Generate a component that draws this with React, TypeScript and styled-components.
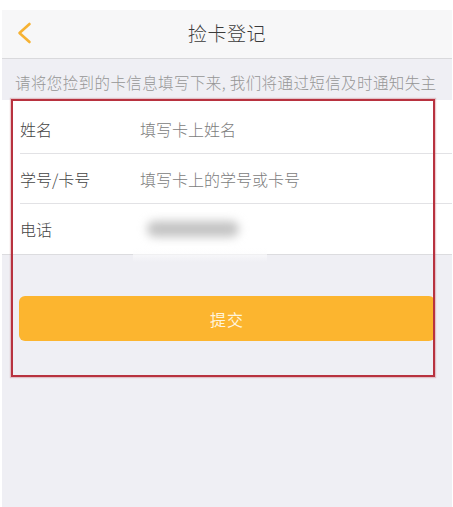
import styled, { createGlobalStyle } from 'styled-components';

const GlobalStyle = createGlobalStyle`
  html, body {
    margin: 0;
    padding: 0;
    background: #ffffff;
  }
  body {
    font-family: "Noto Sans CJK SC", "Noto Sans", sans-serif;
  }
`;

const Screen = styled.div`
  position: relative;
  margin: 10px 1px 0 2px;
  height: 497px;
  background: #efeff4;
  display: flex;
  flex-direction: column;
`;

const NavBar = styled.div`
  height: 48px;
  background: #f7f7f8;
  border-bottom: 1px solid #d9d9dc;
  display: grid;
  grid-template-columns: 60px 1fr 60px;
  align-items: center;
`;

const BackButton = styled.div`
  display: flex;
  align-items: center;
  padding-left: 15px;
  padding-bottom: 2px;
`;

const Title = styled.div`
  text-align: center;
  font-size: 19px;
  font-weight: 300;
  color: #3a3a3a;
  letter-spacing: 0.5px;
  padding-bottom: 4px;
`;

const Hint = styled.div`
  height: 41px;
  box-sizing: border-box;
  padding: 13px 0 0 13px;
  font-size: 15.5px;
  font-weight: 300;
  line-height: 20px;
  color: #969696;
  letter-spacing: 0.4px;
  white-space: nowrap;
`;

const Form = styled.div`
  background: #ffffff;
  padding-top: 4px;
  border-bottom: 1px solid #dcdcdf;
`;

const Row = styled.div<{ $last?: boolean }>`
  position: relative;
  height: 50px;
  margin-left: 18px;
  display: flex;
  align-items: center;
  border-bottom: ${(p) => (p.$last ? 'none' : '1px solid #e2e2e5')};
  box-sizing: border-box;
`;

const Label = styled.div`
  width: 120px;
  font-size: 16px;
  font-weight: 300;
  color: #444444;
`;

const Placeholder = styled.div`
  font-size: 16px;
  font-weight: 300;
  color: #7c7c7c;
`;

const Redaction = styled.div`
  position: absolute;
  left: 113px;
  top: 0;
  bottom: -8px;
  width: 134px;
  background: linear-gradient(#ffffff 75%, rgba(239, 239, 244, 0.2));
  z-index: 1;
`;

const BlurBlob = styled.div`
  position: absolute;
  left: 14px;
  top: 17px;
  width: 92px;
  height: 16px;
  border-radius: 8px;
  background: #c4c4c4;
  filter: blur(5px);
`;

const ButtonArea = styled.div`
  padding: 41px 17px 0 17px;
`;

const SubmitButton = styled.button`
  width: 100%;
  height: 45px;
  border: none;
  border-radius: 6px;
  background: #fcb52f;
  color: #fff4dc;
  font-family: inherit;
  font-size: 16px;
  font-weight: 400;
  letter-spacing: 1px;
`;

const Annotation = styled.div`
  position: absolute;
  left: 9px;
  top: 89px;
  width: 424px;
  height: 278px;
  box-sizing: border-box;
  border: 2px solid #b8323f;
  box-shadow: 0 0 1px 1px rgba(184, 50, 63, 0.25);
  pointer-events: none;
  z-index: 2;
`;

const Chevron = () => (
  <svg width="15" height="22" viewBox="0 0 15 22">
    <polyline
      points="12.5,2 2.5,11 12.5,20"
      fill="none"
      stroke="#f6b233"
      strokeWidth="2.6"
      strokeLinecap="round"
      strokeLinejoin="round"
    />
  </svg>
);

const App = () => {
  return (
    <>
      <GlobalStyle />
      <Screen>
        <NavBar>
          <BackButton>
            <Chevron />
          </BackButton>
          <Title>捡卡登记</Title>
          <div />
        </NavBar>
        <Hint>请将您捡到的卡信息填写下来, 我们将通过短信及时通知失主</Hint>
        <Form>
          <Row>
            <Label>姓名</Label>
            <Placeholder>填写卡上姓名</Placeholder>
          </Row>
          <Row>
            <Label>学号/卡号</Label>
            <Placeholder>填写卡上的学号或卡号</Placeholder>
          </Row>
          <Row $last>
            <Label>电话</Label>
            <Redaction>
              <BlurBlob />
            </Redaction>
          </Row>
        </Form>
        <ButtonArea>
          <SubmitButton>提交</SubmitButton>
        </ButtonArea>
        <Annotation />
      </Screen>
    </>
  );
};

export default App;
